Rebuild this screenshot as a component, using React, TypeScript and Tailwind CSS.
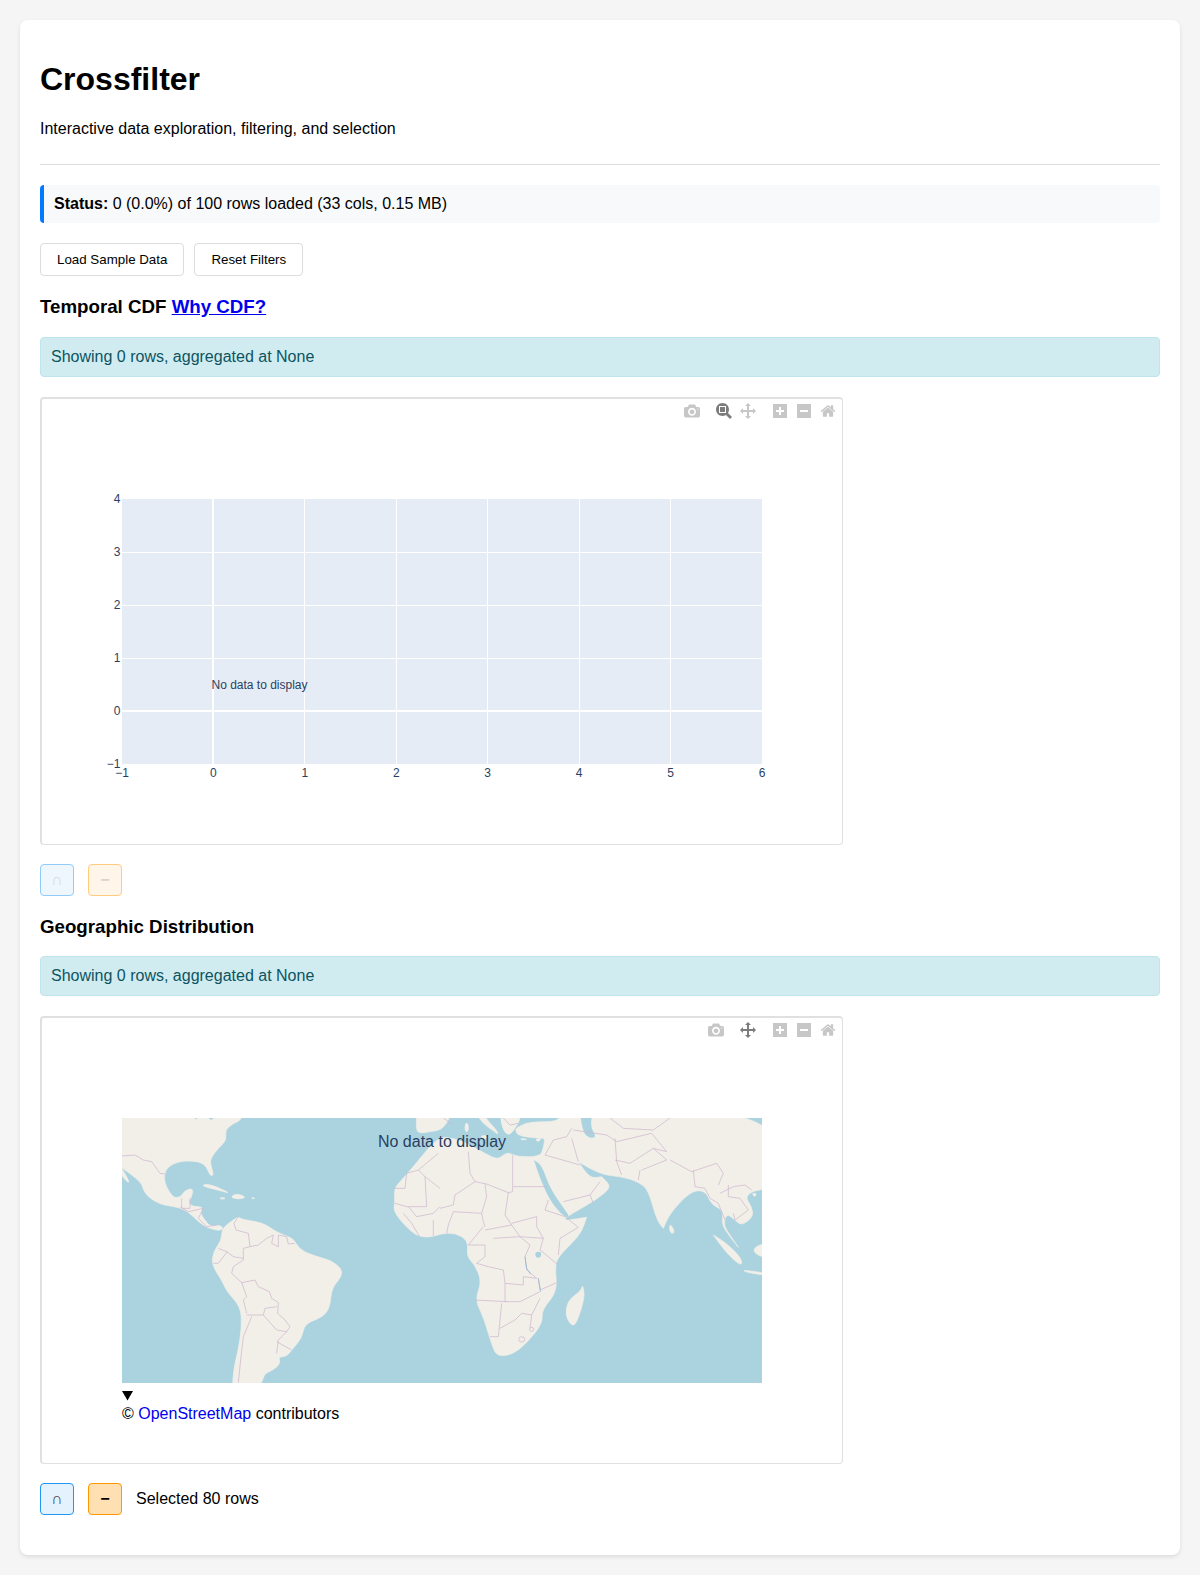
import React from "react";

const CAMERA =
  "m500 450c-83 0-150-67-150-150 0-83 67-150 150-150 83 0 150 67 150 150 0 83-67 150-150 150z m400 150h-120c-16 0-34 13-39 29l-31 93c-6 15-23 28-40 28h-340c-16 0-34-13-39-28l-31-94c-6-15-23-28-40-28h-120c-55 0-100-45-100-100v-450c0-55 45-100 100-100h800c55 0 100 45 100 100v450c0 55-45 100-100 100z m-400-550c-138 0-250 112-250 250 0 138 112 250 250 250 138 0 250-112 250-250 0-138-112-250-250-250z m365 380c-19 0-35 16-35 35 0 19 16 35 35 35 19 0 35-16 35-35 0-19-16-35-35-35z";
const ZOOMBOX =
  "m1000-25l-250 251c40 63 63 138 63 218 0 224-182 406-407 406-224 0-406-182-406-406s183-406 407-406c80 0 155 22 218 62l250-250 125 125z m-812 250l0 438 437 0 0-438-437 0z m62 375l313 0 0-312-313 0 0 312z";
const PAN =
  "m1000 350l-187 188 0-125-250 0 0 250 125 0-188 187-187-187 125 0 0-250-250 0 0 125-188-188 186-187 0 125 252 0 0-250-125 0 187-188 188 188-125 0 0 250 250 0 0-125 187 188z";
const PLUS =
  "m1 787l0-875 875 0 0 875-875 0z m687-500l-187 0 0-187-125 0 0 187-188 0 0 125 188 0 0 187 125 0 0-187 187 0 0-125z";
const MINUS = "m0 788l0-876 875 0 0 876-875 0z m688-500l-500 0 0 125 500 0 0-125z";
const HOME =
  "m786 296v-267q0-15-11-26t-25-10h-214v214h-143v-214h-214q-15 0-25 10t-11 26v267q0 1 0 2t0 2l321 264 321-264q1-1 1-4z m124 39l-34-41q-5-5-12-6h-2q-7 0-12 3l-386 322-386-322q-7-4-13-4-7 2-12 7l-34 41q-4 5-3 13t6 12l401 334q18 15 42 15t43-15l136-114v109q0 8 5 13t13 5h107q8 0 13-5t5-13v-227l122-102q5-5 6-12t-4-13z";

const ModeIcon = ({ d, w = 1000, active = false }: { d: string; w?: number; active?: boolean }) => (
  <svg
    viewBox={`0 0 ${w} 1000`}
    className={`h-4 w-4 ${active ? "fill-[#444]/70" : "fill-[#444]/30"}`}
  >
    <path d={d} transform="matrix(1 0 0 -1 0 850)" />
  </svg>
);

const Modebar = ({ zoomBox }: { zoomBox: boolean }) => (
  <div className="absolute top-[4px] right-[2px] flex gap-2">
    <div className="flex">
      <div className="px-1">
        <ModeIcon d={CAMERA} />
      </div>
    </div>
    <div className="flex">
      {zoomBox && (
        <div className="px-1">
          <ModeIcon d={ZOOMBOX} active />
        </div>
      )}
      <div className="px-1">
        <ModeIcon d={PAN} active={!zoomBox} />
      </div>
    </div>
    <div className="flex">
      <div className="px-1">
        <ModeIcon d={PLUS} w={875} />
      </div>
      <div className="px-1">
        <ModeIcon d={MINUS} w={875} />
      </div>
      <div className="px-1">
        <ModeIcon d={HOME} w={928.6} />
      </div>
    </div>
  </div>
);

const xTicks = [-1, 0, 1, 2, 3, 4, 5, 6];
const yTicks = [-1, 0, 1, 2, 3, 4];
const tickLabel = (n: number) => (n < 0 ? `\u2212${-n}` : `${n}`);

const EmptyPlot = () => {
  const px = (v: number) => 80 + ((v + 1) * 640) / 7;
  const py = (v: number) => 365 - (v + 1) * 53;
  return (
    <svg width="800" height="445" className="block">
      <rect x="80" y="100" width="640" height="265" fill="#e5ecf6" />
      {xTicks.slice(1, -1).map((t) => (
        <line
          key={t}
          x1={px(t)}
          x2={px(t)}
          y1="100"
          y2="365"
          stroke="#fff"
          strokeWidth={t === 0 ? 2 : 1}
          shapeRendering="crispEdges"
        />
      ))}
      {yTicks.slice(1, -1).map((t) => (
        <line
          key={t}
          y1={py(t)}
          y2={py(t)}
          x1="80"
          x2="720"
          stroke="#fff"
          strokeWidth={t === 0 ? 2 : 1}
          shapeRendering="crispEdges"
        />
      ))}
      <g fill="#2a3f5f" fontSize="12" fontFamily="'Liberation Sans', sans-serif">
        {xTicks.map((t) => (
          <text key={t} x={px(t)} y="378" textAnchor="middle">
            {tickLabel(t)}
          </text>
        ))}
        {yTicks.map((t) => (
          <text key={t} x="78.5" y={py(t) + 3.5} textAnchor="end">
            {tickLabel(t)}
          </text>
        ))}
        <text x="217.5" y="290" textAnchor="middle">
          No data to display
        </text>
      </g>
    </svg>
  );
};

// land and borders are traced in a 3x grid, viewBox below maps it onto 640x265.
// outlines run past the frame where the land is cut off by the map edge
const LAND = [
  "0,0 395,0 395,30 370,40 345,60 350,90 325,115 305,140 300,160 312,195 300,198 290,170 270,155 225,152 190,160 165,180 162,215 180,250 195,265 215,258 225,240 250,235 245,260 235,280 250,290 280,290 270,310 285,330 300,350 330,345 340,355 330,362 310,358 290,352 265,335 235,305 205,292 180,288 150,282 115,262 100,240 95,220 60,190 0,150",
  "30,165 60,218 50,215 30,190",
  "335,355 370,330 385,320 395,328 440,335 470,345 490,360 520,375 550,385 570,420 620,440 660,450 695,475 695,500 665,535 660,590 640,620 600,635 582,650 575,685 545,720 530,740 505,740 512,760 490,780 465,790 460,805 440,850 365,850 372,770 385,720 395,650 392,590 350,545 335,510 305,465 310,425 335,390",
  "275,225 300,222 340,240 360,250 330,242 290,232",
  "360,262 380,250 410,262 385,268",
  "330,263 345,263 345,267 330,267",
  "422,263 436,264 430,267",
  "920,0 1020,0 1020,24 995,60 960,65 930,70 918,60",
  "985,80 1035,85 1080,105 1125,130 1165,150 1190,125 1220,140 1290,140 1300,115 1305,85 1290,85 1225,78 1215,60 1225,50 1260,35 1345,36 1360,0 2000,0 2000,235 1935,240 1905,260 1925,290 1930,320 1895,347 1875,330 1850,310 1840,345 1860,375 1885,412 1885,412 1860,380 1835,345 1840,300 1805,285 1785,240 1740,245 1680,310 1660,355 1660,355 1640,330 1615,240 1585,215 1535,200 1480,195 1430,170 1405,155 1405,155 1440,205 1475,200 1475,200 1505,230 1470,260 1440,280 1370,320 1365,330 1375,330 1430,322 1430,322 1415,365 1390,395 1345,440 1335,470 1342,545 1295,600 1298,640 1250,700 1205,735 1165,738 1150,720 1120,620 1095,570 1115,515 1095,465 1070,440 1075,392 1035,368 990,372 970,380 930,382 900,362 870,330 850,300 855,280 852,235 875,210 910,170 930,145",
  "1090,0 1125,0 1125,24 1160,60 1165,75 1150,62 1120,42",
  "1170,0 1230,0 1230,24 1225,40 1205,70 1190,75 1175,50",
  "1110,78 1130,75 1128,90",
  "1065,40 1075,40 1075,65 1065,65",
  "1230,85 1255,88 1235,90",
  "1275,88 1295,84 1285,96",
  "1418,528 1418,528 1425,560 1400,640 1385,648 1365,615 1375,570 1410,545",
  "1680,340 1695,365 1685,372 1678,360",
  "1810,375 1810,375 1850,400 1895,445 1895,470 1850,430",
  "1895,478 2000,495 2000,500 1910,488",
  "1930,410 2000,390 2000,450 1935,435",
  "1925,250 1940,250 1935,262",
];

const WATER = [
  "1272,150 1272,150 1295,165 1320,235 1365,300 1380,322 1360,320 1315,265 1285,190",
  "1235,0 1350,0 1345,30 1290,30 1240,42",
  "1408,0 1450,0 1440,50 1460,80 1440,85 1420,70",
  "1275,425 1295,425 1292,443 1277,443",
  "250,0 262,0 262,24 256,31",
  "285,0 312,0 312,24 300,33",
];

const BORDERS = [
  "36,138 75,135 100,150 125,155 150,190 165,192",
  "215,265 215,295 240,295 240,265",
  "210,290 235,305 280,295 265,325 290,350 320,345",
  "385,320 372,340 378,360 415,370 420,410 400,415 400,450",
  "420,410 445,405 470,385 490,375 485,400 505,410 505,375 530,380 535,402 555,400",
  "400,450 370,470 365,490 395,518 435,510 445,530 478,545 485,565 505,578 503,610 525,630 540,650 530,665 505,690 500,730",
  "500,695 545,720",
  "325,415 350,425 370,440 400,445",
  "310,460 325,460 352,425",
  "395,518 410,560 400,570 410,610",
  "425,620 400,680 393,740 385,818",
  "410,615 460,615 465,595 500,590",
  "460,615 500,660 530,665",
  "985,130 925,180 890,190 885,235 852,235",
  "925,180 945,200 990,235",
  "855,280 890,290 950,290 945,200",
  "895,290 920,320 970,310 990,290",
  "880,310 905,340 930,382",
  "970,330 970,378",
  "1075,125 1080,190 1095,215 1130,222 1195,248 1208,245 1208,135",
  "1210,230 1310,230",
  "1095,215 1035,255 1030,285 990,295",
  "1125,222 1130,260 1115,310 1120,335 1125,350",
  "1195,248 1185,315 1205,345 1125,360",
  "1115,310 1030,305 1015,345 1010,370",
  "1205,340 1280,320 1280,350 1300,385 1230,380 1205,345",
  "1315,270 1305,300 1365,320 1405,352 1350,385 1345,435",
  "1300,385 1290,420 1345,465",
  "1150,385 1230,380 1260,405 1245,440 1250,480 1280,505 1240,500 1240,525 1185,520 1180,480 1135,470 1100,460",
  "1075,405 1125,405 1125,440 1100,460",
  "1075,405 1120,350",
  "1185,520 1185,575 1230,575 1270,555 1290,545",
  "1285,505 1290,540 1340,518",
  "1095,570 1190,575",
  "1175,580 1165,680 1140,680",
  "1170,655 1215,630 1235,610 1265,615 1260,655",
  "1265,615 1290,565",
  "1305,135 1330,90 1370,80 1385,55",
  "1305,135 1410,165",
  "1385,85 1405,155",
  "1360,275 1440,255 1470,215",
  "1440,255 1450,280",
  "1515,85 1520,155 1535,195",
  "1515,150 1560,160 1630,115 1670,125 1625,70 1520,95",
  "1590,180 1585,210",
  "1630,115 1670,150 1595,180",
  "1680,150 1745,185 1820,160 1840,190 1825,225",
  "1750,180 1755,230 1785,235 1800,265 1825,280 1845,330",
  "1830,250 1870,230 1905,225 1925,240",
  "1855,225 1855,260 1890,265 1915,300 1875,330 1870,310",
  "1390,60 1490,75 1520,95",
  "1630,60 1680,24",
  "1500,24 1540,55 1630,60",
  "1180,24 1200,45 1225,40",
  "1000,24 1030,45",
];

// rounds a traced outline through the midpoints of its edges
const smooth = (points: string) => {
  const pts = points.split(" ").map((p) => p.split(",").map(Number));
  const mid = (a: number[], b: number[]) => [(a[0] + b[0]) / 2, (a[1] + b[1]) / 2];
  const start = mid(pts[pts.length - 1], pts[0]);
  let d = `M${start[0]} ${start[1]}`;
  pts.forEach((p, i) => {
    const m = mid(p, pts[(i + 1) % pts.length]);
    d += `Q${p[0]} ${p[1]} ${m[0]} ${m[1]}`;
  });
  return d + "Z";
};

const WorldMap = () => (
  <svg viewBox="36 24 1920 795" preserveAspectRatio="none" className="block h-[265px] w-[640px]">
    <rect x="36" y="24" width="1920" height="795" fill="#aad3df" />
    {LAND.map((p, i) => (
      <path key={i} d={smooth(p)} fill="#f2efe9" stroke="#f2efe9" strokeWidth="2" />
    ))}
    {WATER.map((p, i) => (
      <path key={i} d={smooth(p)} fill="#aad3df" />
    ))}
    {BORDERS.map((p, i) => (
      <polyline key={i} points={p} fill="none" stroke="#cdb7cd" strokeWidth="2.2" strokeLinejoin="round" />
    ))}
    <polyline points="1245,440 1250,475 1262,492" fill="none" stroke="#8fb8cf" strokeWidth="2.4" />
    <polyline points="1285,505 1292,545" fill="none" stroke="#8fb8cf" strokeWidth="2.4" />
    <ellipse cx="1235" cy="688" rx="9" ry="8" fill="none" stroke="#cdb7cd" strokeWidth="2.2" />
    <circle cx="1265" cy="658" r="6" fill="none" stroke="#cdb7cd" strokeWidth="2.2" />
  </svg>
);

const InfoBox = () => (
  <div className="mb-5 rounded border border-[#bee5eb] bg-[#d1ecf1] p-2.5 text-[#0c5460]">
    Showing 0 rows, aggregated at None
  </div>
);

const FilterButtons = ({ disabled }: { disabled: boolean }) => (
  <>
    <button
      type="button"
      className={`h-8 w-[34px] rounded border text-base ${disabled ? "border-[#90cbf9] bg-[#eff7fe] text-[#d5d8dc]" : "border-[#2196f3] bg-[#e3f2fd] text-[#444]"}`}
    >
      ∩
    </button>
    <button
      type="button"
      className={`ml-3.5 h-8 w-[34px] rounded border text-base font-bold ${disabled ? "border-[#ffcb7f] bg-[#fff5e8] text-[#d8d4ce]" : "border-[#ff9800] bg-[#ffe0b2] text-black"}`}
    >
      −
    </button>
  </>
);

const App = () => {
  return (
    <div className="min-h-[1575px] bg-[#f5f5f5] p-5 font-['Liberation_Sans',Arial,sans-serif] text-base leading-[18px] text-black">
      <div className="rounded-lg bg-white px-5 pb-10 pt-5 shadow-[0_2px_4px_rgba(0,0,0,0.1)]">
        <div className="mb-5 border-b border-[#ddd] pb-2.5">
          <h1 className="mb-[22px] mt-[21px] text-[32px] leading-[37px] font-bold">Crossfilter</h1>
          <p className="mb-4 mt-0">Interactive data exploration, filtering, and selection</p>
        </div>

        <div className="mb-5 rounded border-l-4 border-[#007bff] bg-[#f8f9fa] p-2.5">
          <strong>Status:</strong> 0 (0.0%) of 100 rows loaded (33 cols, 0.15 MB)
        </div>

        <div className="flex gap-2.5">
          <button
            type="button"
            className="h-[33px] rounded border border-[#ddd] bg-white px-4 text-[13.33px] text-black"
          >
            Load Sample Data
          </button>
          <button
            type="button"
            className="h-[33px] rounded border border-[#ddd] bg-white px-4 text-[13.33px] text-black"
          >
            Reset Filters
          </button>
        </div>

        <h3 className="mb-[19px] mt-5 text-[18.72px] leading-[22px] font-bold">
          Temporal CDF{" "}
          <a href="#" className="text-[#0000ee] underline">
            Why CDF?
          </a>
        </h3>
        <InfoBox />
        <div className="relative h-[448px] w-[803px] rounded border-t-2 border-r border-b border-l-2 border-[#e0e0e0]">
          <EmptyPlot />
          <Modebar zoomBox />
        </div>
        <div className="mt-[19px] flex items-center">
          <FilterButtons disabled />
        </div>

        <h3 className="mb-[18px] mt-5 text-[18.72px] leading-[22px] font-bold">Geographic Distribution</h3>
        <InfoBox />
        <div className="relative h-[448px] w-[803px] rounded border-t-2 border-r border-b border-l-2 border-[#e0e0e0] pl-20 pt-[100px]">
          <div className="relative w-[640px]">
            <WorldMap />
            <span className="absolute left-0 right-0 top-[15px] text-center text-[#2a3f5f]">
              No data to display
            </span>
          </div>
          <div className="flex h-[20px] items-center pt-[5px]">
            <svg width="12" height="10" viewBox="0 0 12 10">
              <path d="M0 0h11L5.500 9.500z" fill="#000" />
            </svg>
          </div>
          <div className="mt-0.5">
            © <a href="#" className="text-[#0000ee]">OpenStreetMap</a> contributors
          </div>
          <Modebar zoomBox={false} />
        </div>
        <div className="mt-[19px] flex items-center">
          <FilterButtons disabled={false} />
          <span className="ml-3.5">Selected 80 rows</span>
        </div>
      </div>
    </div>
  );
};

export default App;
